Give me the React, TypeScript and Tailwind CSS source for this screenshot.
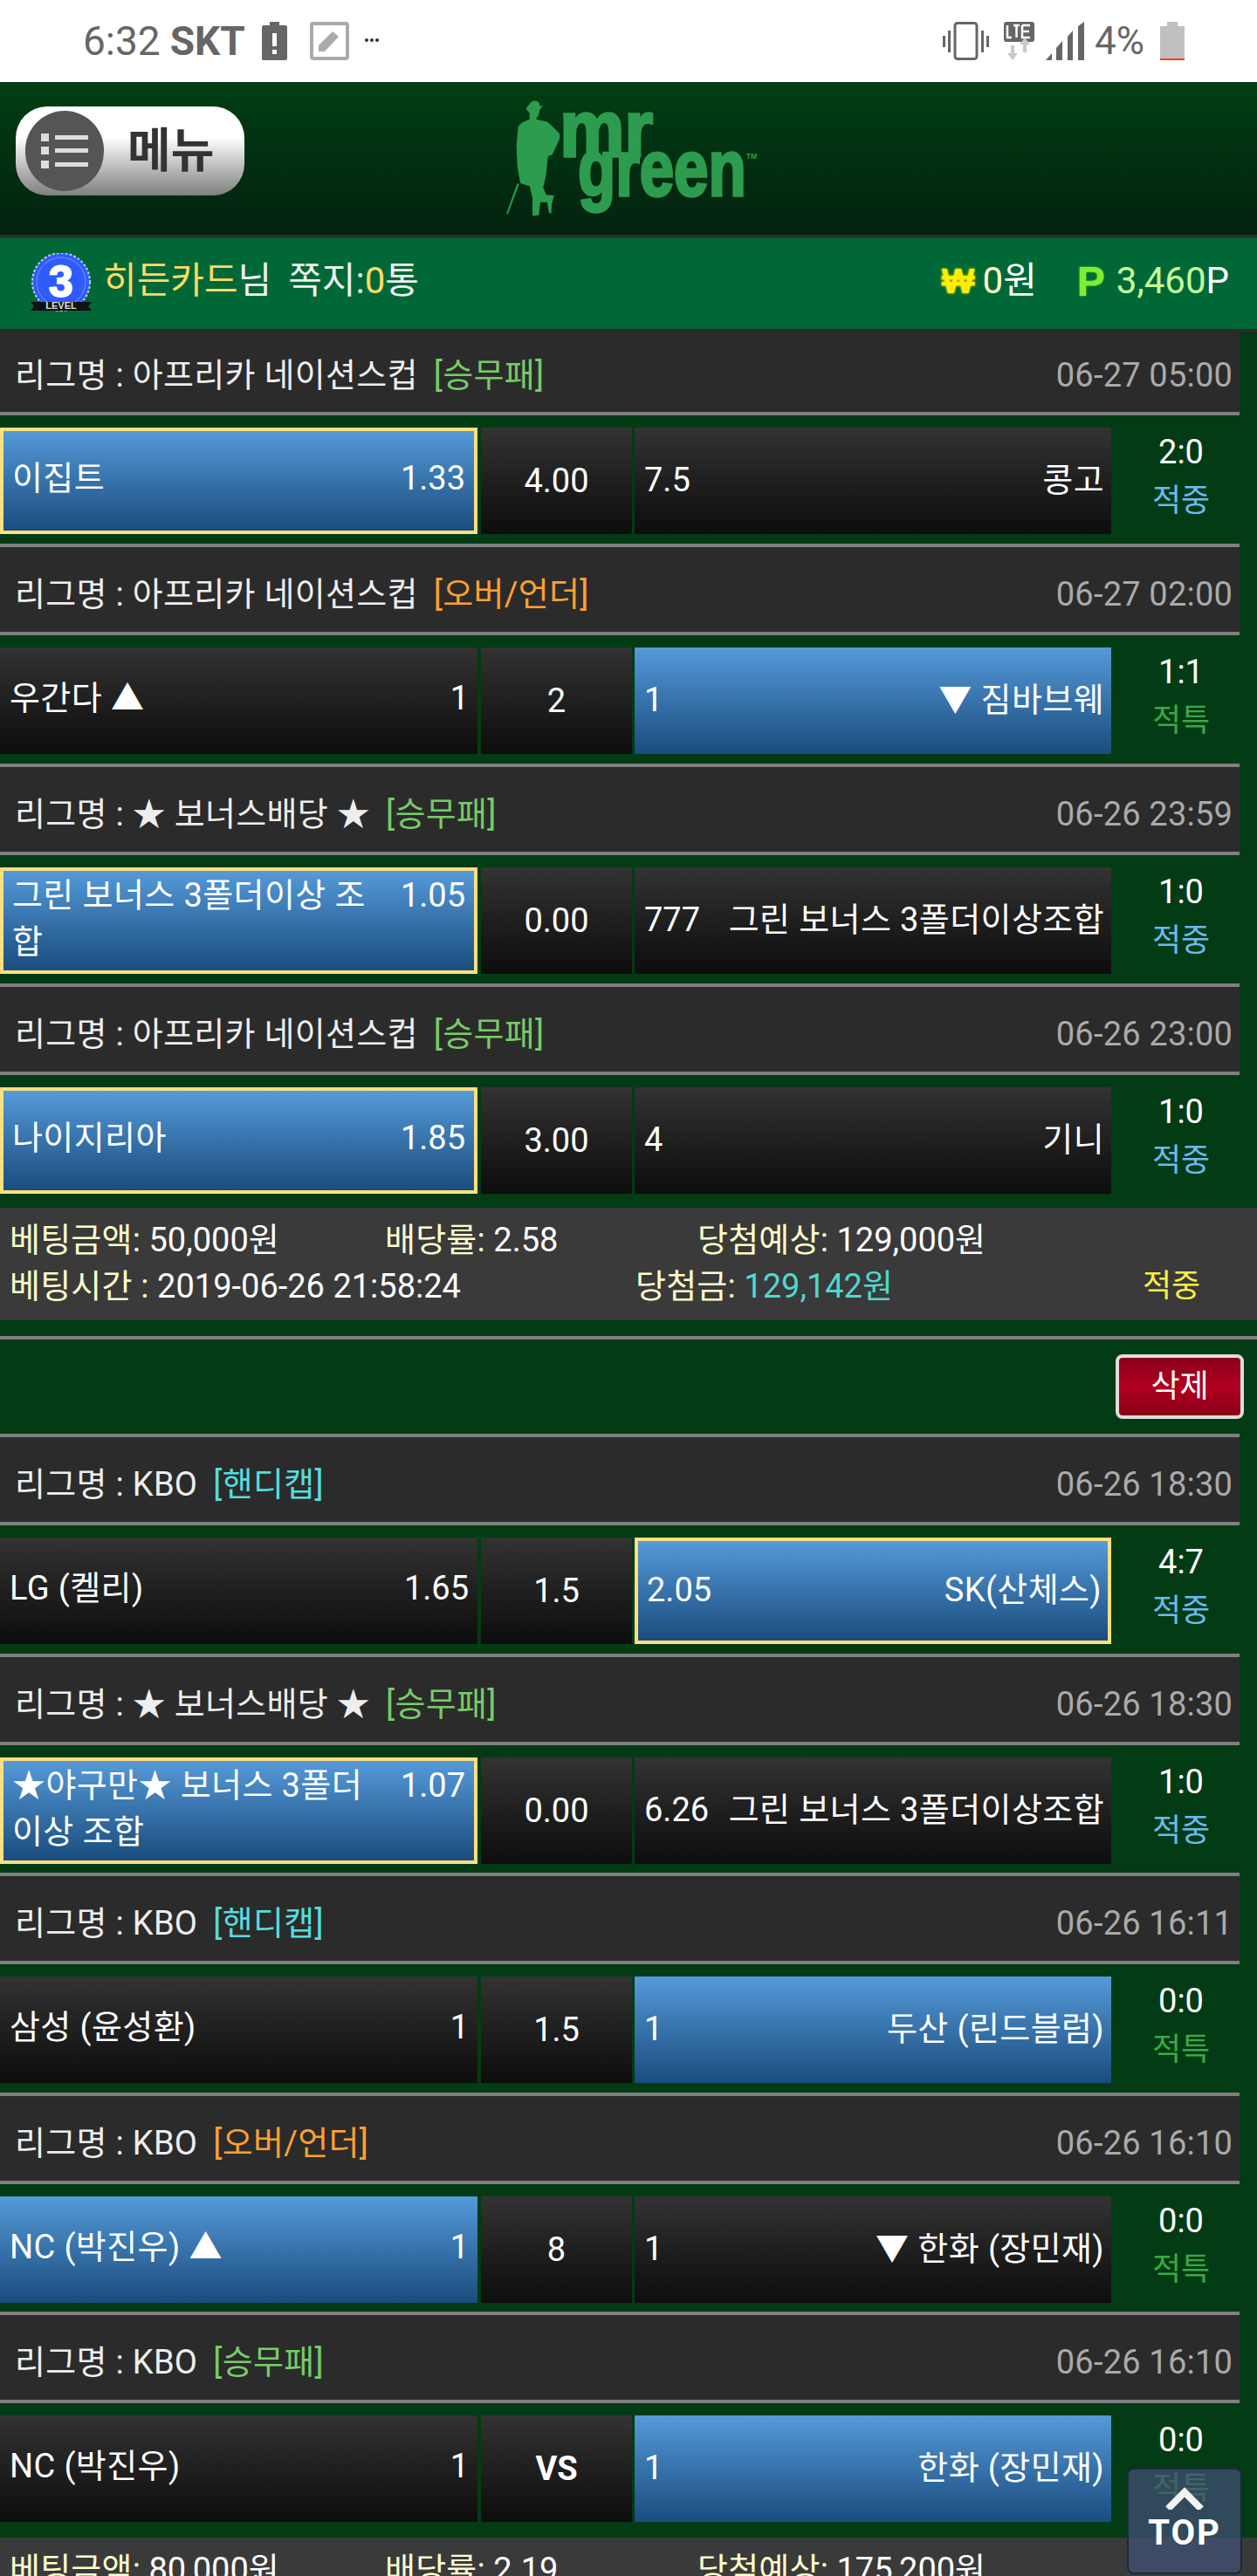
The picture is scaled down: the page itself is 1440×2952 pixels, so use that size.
import React from "react";

type Game = {
  league: string;
  tag: string;
  time: string;
  left: React.ReactNode;
  leftOdds: string;
  mid: string;
  rightOdds: string;
  right: React.ReactNode;
  pick: "left" | "right";
  selected?: boolean;
  score: string;
  hit: boolean;
  tight?: boolean;
};

const tagColors: Record<string, string> = {
  "[승무패]": "text-[#77cc66]",
  "[오버/언더]": "text-[#ffa033]",
  "[핸디캡]": "text-[#55dddd]",
};

const firstGames: Game[] = [
  { league: "아프리카 네이션스컵", tag: "[승무패]", time: "06-27 05:00", left: "이집트", leftOdds: "1.33", mid: "4.00", rightOdds: "7.5", right: "콩고", pick: "left", selected: true, score: "2:0", hit: true },
  { league: "아프리카 네이션스컵", tag: "[오버/언더]", time: "06-27 02:00", left: "우간다 ▲", leftOdds: "1", mid: "2", rightOdds: "1", right: "▼ 짐바브웨", pick: "right", score: "1:1", hit: false },
  { league: "★ 보너스배당 ★", tag: "[승무패]", time: "06-26 23:59", left: "그린 보너스 3폴더이상 조합", leftOdds: "1.05", mid: "0.00", rightOdds: "777", right: "그린 보너스 3폴더이상조합", pick: "left", selected: true, score: "1:0", hit: true },
  { league: "아프리카 네이션스컵", tag: "[승무패]", time: "06-26 23:00", left: "나이지리아", leftOdds: "1.85", mid: "3.00", rightOdds: "4", right: "기니", pick: "left", selected: true, score: "1:0", hit: true },
];

const secondGames: Game[] = [
  { league: "KBO", tag: "[핸디캡]", time: "06-26 18:30", left: "LG (켈리)", leftOdds: "1.65", mid: "1.5", rightOdds: "2.05", right: "SK(산체스)", pick: "right", selected: true, score: "4:7", hit: true },
  { league: "★ 보너스배당 ★", tag: "[승무패]", time: "06-26 18:30", left: "★야구만★ 보너스 3폴더이상 조합", leftOdds: "1.07", mid: "0.00", rightOdds: "6.26", right: "그린 보너스 3폴더이상조합", pick: "left", selected: true, score: "1:0", hit: true, tight: true },
  { league: "KBO", tag: "[핸디캡]", time: "06-26 16:11", left: "삼성 (윤성환)", leftOdds: "1", mid: "1.5", rightOdds: "1", right: "두산 (린드블럼)", pick: "right", score: "0:0", hit: false },
  { league: "KBO", tag: "[오버/언더]", time: "06-26 16:10", left: "NC (박진우) ▲", leftOdds: "1", mid: "8", rightOdds: "1", right: "▼ 한화 (장민재)", pick: "left", score: "0:0", hit: false, tight: true },
  { league: "KBO", tag: "[승무패]", time: "06-26 16:10", left: "NC (박진우)", leftOdds: "1", mid: "VS", rightOdds: "1", right: "한화 (장민재)", pick: "right", score: "0:0", hit: false },
];

const blue = "bg-linear-to-b from-[#559ad9] to-[#1a4d7e]";
const dark = "bg-linear-to-b from-[#333333] to-[#0d0d0d]";

function GameRow({ game, first }: { game: Game; first?: boolean }) {
  const leftPicked = game.pick === "left";
  const rightPicked = game.pick === "right";
  return (
    <div className={game.tight ? "mb-[10px]" : "mb-[11px]"}>
      <div
        className={`w-[1420px] flex items-center justify-between bg-[#2b2b2b] border-b-4 border-[#808080] pl-[17px] pr-[8px] ${
          first ? "h-[95px] pt-[7px]" : "h-[105px] border-t-4 pt-[12px]"
        }`}
      >
        <div className="text-[#eeeeee] tracking-[0.3px]">
          리그명 : {game.league}
          <span className={`ml-[18px] ${tagColors[game.tag]}`}>{game.tag}</span>
        </div>
        <div className="text-[#aaaaaa] tracking-[0.2px]">{game.time}</div>
      </div>
      <div className="mt-[14px] flex h-[122px] text-white">
        <div
          className={`w-[547px] flex items-center ${leftPicked ? blue : dark} ${
            leftPicked && game.selected
              ? "border-4 border-[#ffdf80] pl-[10px] pr-[10px]"
              : "pl-[11px] pr-[10px]"
          }`}
        >
          <div className="flex w-full items-start leading-[53px] pb-[5px]">
            <div className="flex-1 min-w-0 pr-[25px] tracking-[0.4px]">{game.left}</div>
            <div>{game.leftOdds}</div>
          </div>
        </div>
        <div className={`ml-[4px] w-[173px] flex items-center justify-center ${dark} ${game.mid === "VS" ? "font-bold" : ""}`}>
          {game.mid}
        </div>
        <div
          className={`ml-[3px] w-[546px] flex items-center justify-between pb-[2px] ${rightPicked ? blue : dark} ${
            rightPicked && game.selected ? "border-4 border-[#ffdf80] pl-[10px] pr-[7px]" : "pl-[11px] pr-[8px]"
          }`}
        >
          <div>{game.rightOdds}</div>
          <div className="tracking-[0.4px]">{game.right}</div>
        </div>
        <div className="w-[160px] flex flex-col items-center leading-[56px]">
          <div>{game.score}</div>
          <div className={`text-[36px] ${game.hit ? "text-[#6cb9ef]" : "text-[#3aa845]"}`}>
            {game.hit ? "적중" : "적특"}
          </div>
        </div>
      </div>
    </div>
  );
}

function Summary({ stake, rate, expected, when, paid, top }: { stake: string; rate: string; expected: string; when?: string; paid?: string; top: string }) {
  const label = "text-[#ffffcc] tracking-[0.2px]";
  return (
    <div className={`h-[129px] bg-[#3a3a3a] pl-[11px] pt-[11px] leading-[53px] text-white ${top}`}>
      <div className="flex">
        <div className="w-[430px]"><span className={label}>베팅금액:</span> {stake}</div>
        <div className="w-[358px]"><span className={label}>배당률:</span> {rate}</div>
        <div><span className={label}>당첨예상:</span> {expected}</div>
      </div>
      {when && (
        <div className="flex">
          <div className="w-[717px]"><span className={label}>베팅시간 :</span> {when}</div>
          <div className="w-[581px]">
            <span className={label}>당첨금:</span> <span className="text-[#4fd8d0]">{paid}</span>
          </div>
          <div className="text-[36px] text-[#ffee44]">적중</div>
        </div>
      )}
    </div>
  );
}

function StatusBar() {
  return (
    <div className="h-[94px] bg-white flex items-center pl-[95px] pr-[83px] text-[#666666] text-[46px]">
      <span>6:32</span>
      <span className="ml-[11px] font-bold">SKT</span>
      <svg className="ml-[19px]" width="29" height="44" viewBox="0 0 29 44">
        <path d="M9 0h11v4h7a2 2 0 0 1 2 2v36a2 2 0 0 1-2 2H2a2 2 0 0 1-2-2V6a2 2 0 0 1 2-2h7z" fill="#666" />
        <rect x="12" y="13" width="5" height="15" fill="#fff" />
        <rect x="12" y="32" width="5" height="5" fill="#fff" />
      </svg>
      <svg className="ml-[26px]" width="45" height="44" viewBox="0 0 45 44">
        <rect x="2" y="2" width="41" height="40" rx="2" fill="none" stroke="#aaa" strokeWidth="4" />
        <path d="M10 34v-7L26 11l7 6-16 17z" fill="#aaa" />
      </svg>
      <span className="ml-[18px] flex gap-[2px] mt-[-3px]">
        <i className="w-[4px] h-[4px] rounded-full bg-[#333]" />
        <i className="w-[4px] h-[4px] rounded-full bg-[#333]" />
        <i className="w-[4px] h-[4px] rounded-full bg-[#333]" />
      </span>
      <div className="flex-1" />
      <svg width="53" height="44" viewBox="0 0 53 44">
        <rect x="14" y="1.500" width="25" height="41" rx="3" fill="none" stroke="#666" strokeWidth="3" />
        <path d="M0 16h3v13H0zM6 10h3v25H6zM44 10h3v25h-3zM50 16h3v13h-3z" fill="#666" />
      </svg>
      <svg className="ml-[17px]" width="35" height="44" viewBox="0 0 35 44">
        <rect width="35" height="23" rx="3" fill="#666" />
        <path d="M4 4v14h5M11 4h7M14.500 4v14M21 4h9M21 4v14h9M21 11h8" fill="none" stroke="#fff" strokeWidth="2.500" />
        <path d="M8 27h4v9h4l-6 8-6-8h4zM22 35v-9h-4l6-8 6 8h-4v9z" fill="#c8c8c8" />
      </svg>
      <svg className="ml-[13px]" width="44" height="44" viewBox="0 0 44 44">
        <path d="M0 44l7-8v8zM12 44V30l7-8v22zM25 44V17l6-7v34zM37 44V5l7-5v44z" fill="#666" />
      </svg>
      <span className="ml-[12px] text-[44px]">4%</span>
      <svg className="ml-[18px]" width="28" height="44" viewBox="0 0 28 44">
        <path d="M8 0h12v5h8v37H0V5h8z" fill="#c0c0c0" />
        <rect y="42" width="28" height="2" fill="#ff4010" />
      </svg>
    </div>
  );
}

function Logo() {
  return (
    <svg className="ml-[280px] mt-[6px] overflow-visible" width="340" height="160" viewBox="0 0 1020 480">
      <g fill="#2d9c4f" stroke="#2d9c4f">
        <path strokeWidth="0" d="M128 72L140 58C145 44 168 42 174 56L176 66L188 62L174 78C174 92 170 102 162 107L168 112L198 118C212 125 228 145 243 160L243 178L218 232L203 238L197 300L187 345L197 370L224 372L217 400L214 436L206 430L201 395L177 395L172 440L150 442L150 380L140 340L108 330L98 270L95 200L101 135L113 122L140 110L140 88L130 78Z" />
        <path strokeWidth="0" d="M60 435L98 330L104 332L66 436Z" />
        <text x="244" y="236" strokeWidth="10" fontFamily="Liberation Sans" fontWeight="700" fontSize="270" textLength="320" lengthAdjust="spacingAndGlyphs">mr</text>
        <text x="306" y="371" strokeWidth="10" fontFamily="Liberation Sans" fontWeight="700" fontSize="270" textLength="578" lengthAdjust="spacingAndGlyphs">green</text>
        <text x="884" y="245" strokeWidth="0" fontFamily="Liberation Sans" fontWeight="700" fontSize="26">TM</text>
      </g>
    </svg>
  );
}

function Badge() {
  return (
    <svg width="70" height="70" viewBox="0 0 70 70">
      <circle cx="35" cy="33" r="33" fill="#2e5cff" stroke="#b8c8ff" strokeWidth="2" strokeDasharray="3 2" />
      <circle cx="35" cy="33" r="28" fill="none" stroke="#7d98ff" strokeWidth="1" />
      <text x="35" y="50" textAnchor="middle" fontFamily="Liberation Sans" fontWeight="700" fontSize="50" stroke="#fff" strokeWidth="2" fill="#fff">3</text>
      <path d="M0 56h70l-4 5 4 5H0l4-5z" fill="#111" />
      <text x="35" y="64" textAnchor="middle" fontFamily="Liberation Sans" fontWeight="700" fontSize="11" fill="#ddd">LEVEL</text>
    </svg>
  );
}

export default function App() {
  return (
    <div className="relative h-[2952px] w-[1440px] overflow-hidden bg-[#023b14] font-['Roboto','Noto_Sans_CJK_KR',sans-serif] text-[38px]">
      <StatusBar />

      <div className="h-[175px] flex items-start bg-linear-to-b from-[#013e13] to-[#02220f]">
        <div className="ml-[18px] mt-[28px] w-[262px] h-[102px] shrink-0 rounded-[36px] bg-linear-to-b from-white from-35% to-[#808080] flex items-center pl-[11px]">
          <div className="w-[90px] h-[92px] rounded-full bg-[#555555] flex items-center justify-center">
            <svg width="56" height="42" viewBox="0 0 56 42">
              <path d="M1 1h9v9H1zM1 16h9v9H1zM1 32h9v9H1zM17 3h38v5H17zM17 18h38v5H17zM17 34h38v5H17z" fill="#dddddd" />
            </svg>
          </div>
          <span className="ml-[27px] text-[54px] font-bold text-[#333333]">메뉴</span>
        </div>
        <Logo />
      </div>

      <div className="border-t-4 border-b-4 border-t-[#2d2d2d] border-b-[#2b2b2b] h-[112px] bg-[#006837] flex items-center pl-[35px] pr-[32px] text-[42px] text-[#f0f0f0]">
        <Badge />
        <span className="ml-[13px] mb-[7px]">
          <span className="text-[#ffd966]">히든카드</span>님
        </span>
        <span className="ml-[19px] mb-[7px]">
          쪽지:<span className="text-[#ffd966]">0</span>통
        </span>
        <div className="flex-1" />
        <span className="font-bold text-[40px] text-[#ffee00] font-['Liberation_Sans'] mb-[6px] [text-shadow:0_0_3px_#ffee00]">₩</span>
        <span className="ml-[9px] mb-[7px] text-white">
          <span className="text-[#ffffcc]">0</span>원
        </span>
        <span className="ml-[46px] mb-[4px] text-[48px] leading-none font-bold text-[#7fee33] font-['Liberation_Sans'] [text-shadow:0_0_2px_#7fee33]">P</span>
        <span className="ml-[13px] mb-[7px] text-white">
          <span className="text-[#c8ff99]">3,460</span>P
        </span>
      </div>

      {firstGames.map((g, i) => (
        <GameRow key={g.time} game={g} first={i === 0} />
      ))}

      <Summary top="mt-[16px]" stake="50,000원" rate="2.58" expected="129,000원" when="2019-06-26 21:58:24" paid="129,142원" />

      <div className="mt-[18px] h-[4px] bg-[#808080]" />
      <div className="h-[108px] flex items-center justify-end pr-[15px]">
        <button className="w-[147px] h-[74px] rounded-[8px] border-4 border-[#dddddd] bg-linear-to-b from-[#8a0018] via-[#b00020] to-[#8a0018] text-white text-[36px]">
          삭제
        </button>
      </div>

      {secondGames.map((g) => (
        <GameRow key={g.time + g.left} game={g} />
      ))}

      <Summary top="mt-[18px]" stake="80,000원" rate="2.19" expected="175,200원" />

      <div className="absolute left-[1291px] top-[2828px] w-[132px] h-[122px] rounded-[8px] border-2 border-[#1c2a3a] bg-[rgba(65,80,115,0.75)] flex flex-col items-center">
        <svg className="mt-[20px]" width="44" height="26" viewBox="0 0 44 26">
          <path d="M3 25L22 6l19 19" fill="none" stroke="#f2f2f2" strokeWidth="8" />
        </svg>
        <span className="mt-[5px] text-[40px] leading-[44px] font-bold tracking-[2px] text-white">TOP</span>
      </div>
    </div>
  );
}
